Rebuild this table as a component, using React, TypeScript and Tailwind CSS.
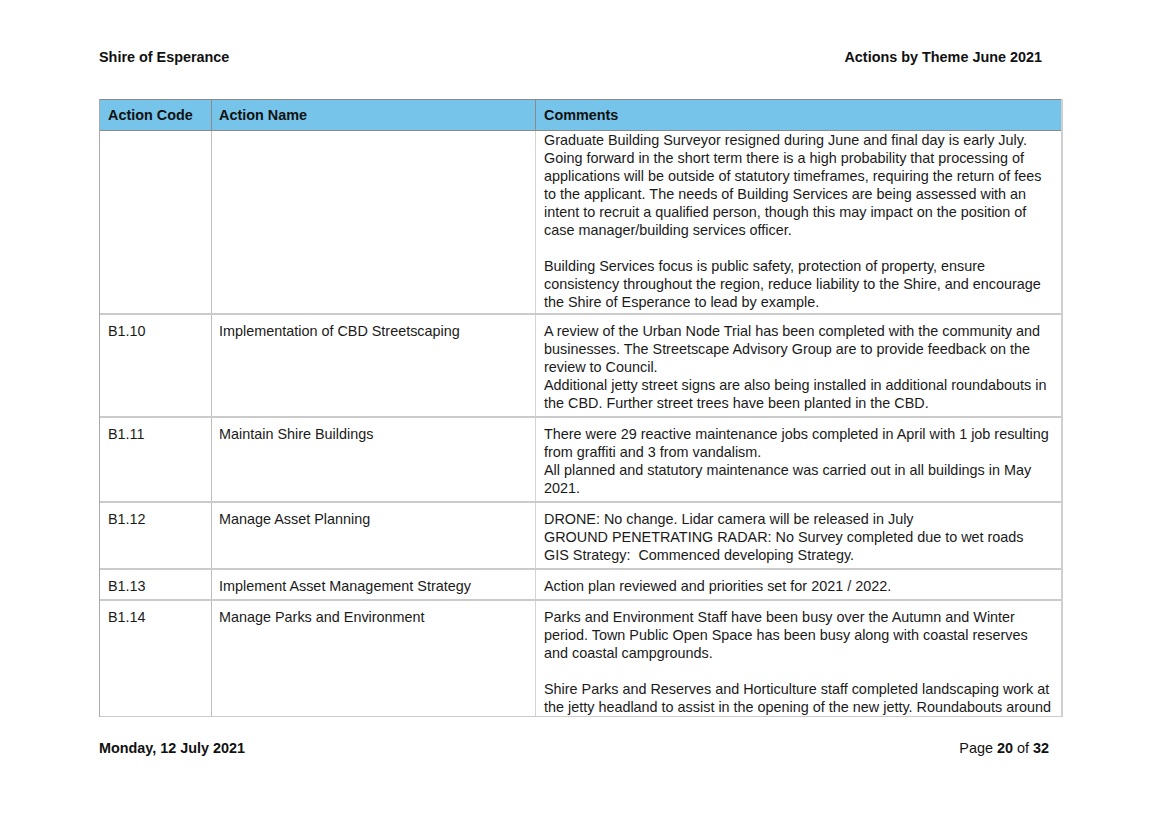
import React from "react";

type Row = { code: string; name: string; lines: string[]; first?: boolean; last?: boolean };

const rows: Row[] = [
  {
    code: "",
    name: "",
    first: true,
    lines: [
      "Graduate Building Surveyor resigned during June and final day is early July.",
      "Going forward in the short term there is a high probability that processing of",
      "applications will be outside of statutory timeframes, requiring the return of fees",
      "to the applicant. The needs of Building Services are being assessed with an",
      "intent to recruit a qualified person, though this may impact on the position of",
      "case manager/building services officer.",
      "",
      "Building Services focus is public safety, protection of property, ensure",
      "consistency throughout the region, reduce liability to the Shire, and encourage",
      "the Shire of Esperance to lead by example.",
    ],
  },
  {
    code: "B1.10",
    name: "Implementation of CBD Streetscaping",
    lines: [
      "A review of the Urban Node Trial has been completed with the community and",
      "businesses. The Streetscape Advisory Group are to provide feedback on the",
      "review to Council.",
      "Additional jetty street signs are also being installed in additional roundabouts in",
      "the CBD. Further street trees have been planted in the CBD.",
    ],
  },
  {
    code: "B1.11",
    name: "Maintain Shire Buildings",
    lines: [
      "There were 29 reactive maintenance jobs completed in April with 1 job resulting",
      "from graffiti and 3 from vandalism.",
      "All planned and statutory maintenance was carried out in all buildings in May",
      "2021.",
    ],
  },
  {
    code: "B1.12",
    name: "Manage Asset Planning",
    lines: [
      "DRONE: No change. Lidar camera will be released in July",
      "GROUND PENETRATING RADAR: No Survey completed due to wet roads",
      "GIS Strategy:  Commenced developing Strategy.",
    ],
  },
  {
    code: "B1.13",
    name: "Implement Asset Management Strategy",
    lines: ["Action plan reviewed and priorities set for 2021 / 2022."],
  },
  {
    code: "B1.14",
    name: "Manage Parks and Environment",
    last: true,
    lines: [
      "Parks and Environment Staff have been busy over the Autumn and Winter",
      "period. Town Public Open Space has been busy along with coastal reserves",
      "and coastal campgrounds.",
      "",
      "Shire Parks and Reserves and Horticulture staff completed landscaping work at",
      "the jetty headland to assist in the opening of the new jetty. Roundabouts around",
    ],
  },
];

function pad(r: Row) {
  if (r.first) return "pt-0 pb-[2px]";
  if (r.last) return "pt-[7px] pb-0";
  return "pt-[7px] pb-[4px]";
}

export default function App() {
  return (
    <div
      className="w-[1160px] h-[821px] bg-white text-[#1a1a1a] text-[14.4px] leading-[18px] overflow-hidden"
      style={{ fontFamily: '"Liberation Sans", Arial, sans-serif' }}
    >
      <div className="ml-[99px] w-[943px] pt-[48px] flex justify-between font-bold leading-[18px] text-[#111]">
        <span>Shire of Esperance</span>
        <span>Actions by Theme June 2021</span>
      </div>

      <div className="ml-[99px] mt-[33px] w-[964px] border-l border-r-2 border-[#a9a9a9] border-r-[#cfcfcf]">
        <div className="grid grid-cols-[112px_324px_1fr] bg-[#77c4ea] border-t border-b border-[#8a8a8a] font-bold text-[#111] h-[32px]">
          <div className="px-[8px] flex items-center border-r border-[#8a8a8a]">Action Code</div>
          <div className="px-[7px] flex items-center border-r border-[#8a8a8a]">Action Name</div>
          <div className="px-[8px] flex items-center">Comments</div>
        </div>
        {rows.map((r, i) => (
          <div
            key={i}
            className={
              "grid grid-cols-[112px_324px_1fr] border-[#cbcbcb] " + (r.last ? "border-b" : "border-b-2")
            }
          >
            <div className={pad(r) + " px-[8px] border-r border-[#bdbdbd]"}>{r.code}</div>
            <div className={pad(r) + " px-[7px] border-r border-[#d4d4d4]"}>{r.name}</div>
            <div className={pad(r) + " pl-[8px] pr-[4px]"}>
              {r.lines.map((l, j) => (
                <div key={j} className="whitespace-pre h-[18px]">
                  {l}
                </div>
              ))}
            </div>
          </div>
        ))}
      </div>

      <div className="ml-[99px] w-[950px] mt-[22px] flex justify-between leading-[18px] text-[#111]">
        <span className="font-bold">Monday, 12 July 2021</span>
        <span>
          Page <span className="font-bold">20</span> of <span className="font-bold">32</span>
        </span>
      </div>
    </div>
  );
}
